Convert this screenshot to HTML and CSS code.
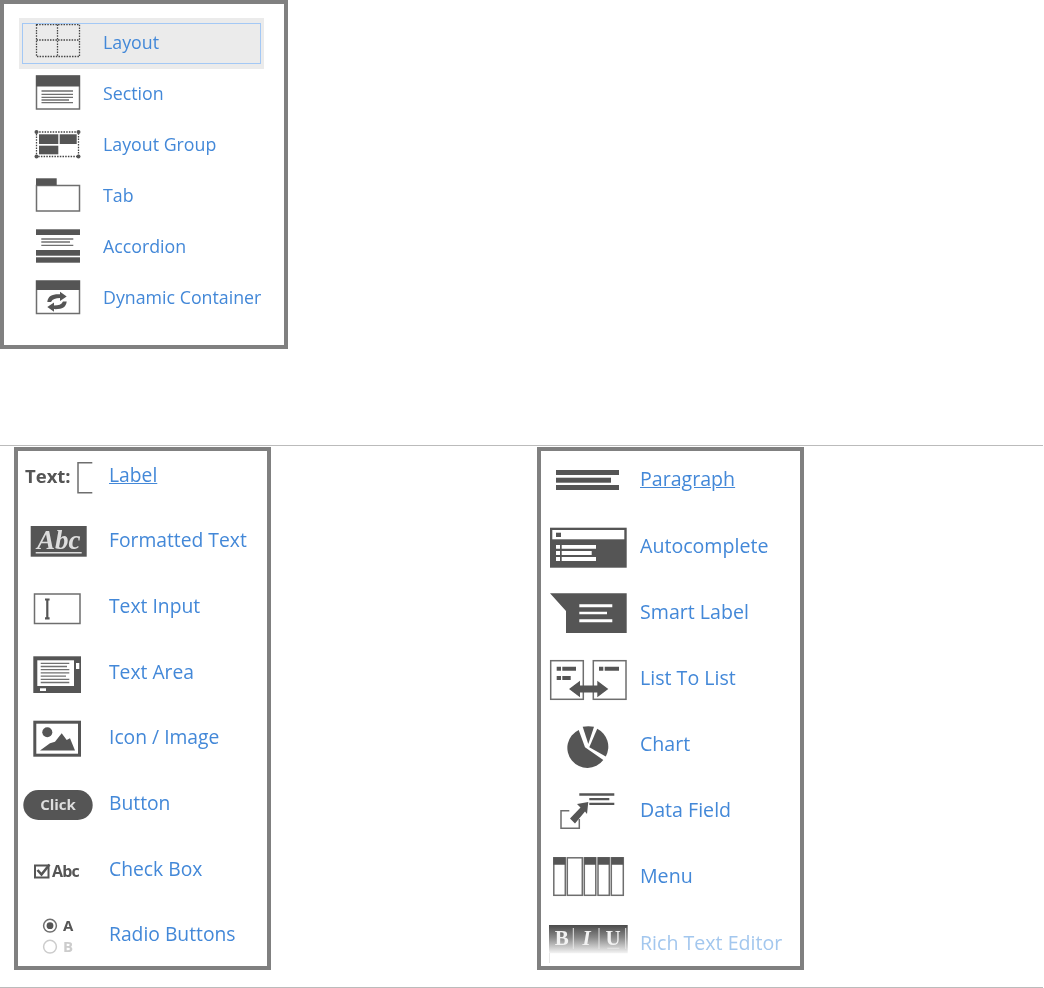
FILE: index.html
```html
<!DOCTYPE html>
<html lang="en">
  <head>
    <meta charset="UTF-8" />
    <title>Layout and control palettes</title>
    <link rel="stylesheet" href="styles.css">
  </head>
  <body>
    <div class="palette palette-top">
      <a class="item item-active">
        <svg class="icon" width="48" height="36" viewBox="0 0 48 36">
          <g class="dots"><rect x="2.5" y="0.5" width="43" height="32"/><path d="M23.5 0.5V32.5M2.5 16H45.5"/></g>
        </svg>
        <span>Layout</span>
      </a>
      <a class="item">
        <svg class="icon" width="48" height="36" viewBox="0 0 48 36">
          <rect class="frame" x="2.5" y="1" width="43" height="33"/><rect class="ink" x="2" y="0.5" width="44" height="11"/>
          <path class="rule" d="M7.5 16H39M7.5 19.3H39M7.5 22.3H39M7.5 25H35M7.5 27.7H39"/>
        </svg>
        <span>Section</span>
      </a>
      <a class="item">
        <svg class="icon" width="48" height="36" viewBox="0 0 48 36">
          <rect class="dots" x="2.5" y="6" width="42" height="24.5"/>
          <circle class="ink" cx="2.5" cy="6" r="2"/><circle class="ink" cx="44.5" cy="6" r="2"/><circle class="ink" cx="2.5" cy="30.5" r="2"/><circle class="ink" cx="44.5" cy="30.5" r="2"/>
          <rect class="ink" x="5" y="8.3" width="19.3" height="9.7"/><rect class="ink" x="25.7" y="8.3" width="17" height="9.7"/><rect class="ink" x="5" y="19.7" width="19.3" height="8.6"/>
        </svg>
        <span>Layout Group</span>
      </a>
      <a class="item">
        <svg class="icon" width="48" height="36" viewBox="0 0 48 36">
          <rect class="frame" x="2.5" y="8.5" width="43" height="25.5"/><rect class="ink" x="2" y="1.3" width="20.7" height="7"/>
        </svg>
        <span>Tab</span>
      </a>
      <a class="item">
        <svg class="icon" width="48" height="36" viewBox="0 0 48 36">
          <rect class="ink" x="2" y="1.3" width="44" height="5.7"/>
          <path class="rule" d="M7.3 11H39.3M7.3 14H36M7.3 17.3H39.3"/>
          <rect class="ink" x="2" y="22" width="44" height="5.7"/><rect class="ink" x="2" y="29.3" width="44" height="5.4"/>
        </svg>
        <span>Accordion</span>
      </a>
      <a class="item">
        <svg class="icon" width="48" height="36" viewBox="0 0 48 36">
          <rect class="frame" x="2.5" y="2" width="43" height="32.5"/><rect class="ink" x="2" y="1.7" width="44" height="9.3"/>
          <path class="ink" d="M13.3 23C14 17 18 15 26 15.3V12.7L32.7 17.5L26 22V19C21.5 19 18.5 20 17 23Z"/>
          <path class="ink" transform="rotate(180 23 22.7)" d="M13.3 23C14 17 18 15 26 15.3V12.7L32.7 17.5L26 22V19C21.5 19 18.5 20 17 23Z"/>
        </svg>
        <span>Dynamic Container</span>
      </a>
    </div>

    <div class="section">
      <div class="palette palette-left">
        <a class="item">
          <svg class="icon" width="72" height="44" viewBox="0 0 72 44">
            <text class="glyph-bold" x="3" y="28" font-size="18.5">Text:</text>
            <path class="frame" d="M70.3 7.7H56V37.7H70.3"/>
          </svg>
          <span class="under">Label</span>
        </a>
        <a class="item">
          <svg class="icon" width="72" height="44" viewBox="0 0 72 44">
            <rect class="ink" x="8.7" y="6" width="56" height="30.7"/>
            <text class="glyph-serif" x="36.7" y="28.5" font-size="27" font-style="italic" text-anchor="middle">Abc</text>
            <path class="pale" d="M13.7 32.7H59.7"/>
          </svg>
          <span>Formatted Text</span>
        </a>
        <a class="item">
          <svg class="icon" width="72" height="44" viewBox="0 0 72 44">
            <rect class="frame" x="12.5" y="8" width="45.5" height="29.5"/>
            <path class="caret" d="M23 13.5H27.6M25.3 13.5V32M23 32.3H27.6"/>
          </svg>
          <span>Text Input</span>
        </a>
        <a class="item">
          <svg class="icon" width="72" height="44" viewBox="0 0 72 44">
            <rect class="ink" x="11.3" y="4.3" width="47.7" height="36.7"/>
            <rect class="blank" x="15.3" y="8.3" width="36.7" height="25.7"/>
            <path class="rule" d="M18.7 11.3H47.3M18.7 14.5H45M18.7 17.7H47.3M18.7 20.9H47.3M18.7 24.1H44M18.7 27.3H47.3M18.7 30.5H47.3"/>
            <rect class="blank" x="54" y="11" width="3.3" height="6"/><rect class="blank" x="18" y="36.3" width="6" height="2.7"/>
          </svg>
          <span>Text Area</span>
        </a>
        <a class="item">
          <svg class="icon" width="72" height="44" viewBox="0 0 72 44">
            <rect class="frame-thick" x="12.8" y="5.2" width="44.7" height="33"/>
            <circle class="ink" cx="25.3" cy="15.3" r="5"/>
            <path class="ink" d="M18 33.5L28 26.3L33 24.7L39.7 16.3L44.7 23L48 21.3L53 33.5Z"/>
          </svg>
          <span>Icon / Image</span>
        </a>
        <a class="item">
          <svg class="icon" width="72" height="44" viewBox="0 0 72 44">
            <rect class="ink" x="1.3" y="7" width="69.4" height="30" rx="15"/>
            <text class="glyph-light" x="36" y="27" font-size="15" text-anchor="middle">Click</text>
          </svg>
          <span>Button</span>
        </a>
        <a class="item">
          <svg class="icon" width="72" height="44" viewBox="0 0 72 44">
            <rect class="frame-dark" x="13" y="16.5" width="13.5" height="12"/>
            <path class="tick" d="M15.5 21L19.5 25.5L27.5 15.5"/>
            <text class="glyph-bold glyph-tight" x="30" y="28" font-size="16">Abc</text>
          </svg>
          <span>Check Box</span>
        </a>
        <a class="item">
          <svg class="icon" width="72" height="44" viewBox="0 0 72 44">
            <circle class="frame" cx="28" cy="11.7" r="6.4"/><circle class="ink" cx="28" cy="11.7" r="3.4"/>
            <text class="glyph-bold" x="41" y="16.7" font-size="15">A</text>
            <circle class="frame-pale" cx="28" cy="32.7" r="6.4"/>
            <text class="glyph-bold glyph-pale" x="41" y="37.7" font-size="15">B</text>
          </svg>
          <span>Radio Buttons</span>
        </a>
      </div>

      <div class="palette palette-right">
        <a class="item">
          <svg class="icon" width="82" height="44" viewBox="0 0 82 44">
            <rect class="ink" x="8" y="12" width="63" height="5"/><rect class="ink" x="8" y="19.7" width="55" height="5"/><rect class="ink" x="8" y="27" width="63" height="5"/>
          </svg>
          <span class="under">Paragraph</span>
        </a>
        <a class="item">
          <svg class="icon" width="82" height="44" viewBox="0 0 82 44">
            <rect class="ink" x="2" y="2.7" width="76.7" height="40"/>
            <rect class="blank" x="4.3" y="5" width="72" height="9.3"/><rect class="ink" x="8" y="7.7" width="5" height="4.3"/>
            <path class="blank" d="M8 20H12V23.7H8ZM8 26H12V30H8ZM8 32H12V36H8ZM13.7 20H48V23.7H13.7ZM13.7 26H43.7V30H13.7ZM13.7 32H48V36H13.7Z"/>
          </svg>
          <span>Autocomplete</span>
        </a>
        <a class="item">
          <svg class="icon" width="82" height="44" viewBox="0 0 82 44">
            <path class="ink" d="M2 2.3H78.7V42H18V20Z"/>
            <path class="blank" d="M31.3 13.3H64.3V16.3H31.3ZM31.3 20.7H59V23.3H31.3ZM31.3 28.3H64.3V31.3H31.3Z"/>
          </svg>
          <span>Smart Label</span>
        </a>
        <a class="item">
          <svg class="icon" width="82" height="44" viewBox="0 0 82 44">
            <rect class="frame" x="2.7" y="3.7" width="32.6" height="38.6"/><rect class="frame" x="45.3" y="3.7" width="32.7" height="38.6"/>
            <path class="ink" d="M8.7 9.7H13V13.7H8.7ZM14.3 9.7H28V13.7H14.3ZM8.7 19H13V23H8.7ZM14.3 19H22.7V23H14.3ZM51 9.7H55.3V13.7H51ZM56.7 9.7H71V13.7H56.7Z"/>
            <path class="ink" d="M21 32L32 23.7V28.5H49.3V23.7L60.3 32L49.3 40.3V35.5H32V40.3Z"/>
          </svg>
          <span>List To List</span>
        </a>
        <a class="item">
          <svg class="icon icon-chart" width="82" height="44" viewBox="0 0 82 44">
            <path class="ink" d="M30.7 6.9A20 20 0 1 0 55.3 37L37 24.3Z"/>
            <path class="ink" d="M34.7 3.7Q40.3 2.8 46 3.7L40.3 21Z"/>
            <path class="ink" d="M49.2 5.8A20 20 0 0 1 57.8 33.4L41.3 24.3Z"/>
          </svg>
          <span>Chart</span>
        </a>
        <a class="item">
          <svg class="icon" width="82" height="44" viewBox="0 0 82 44">
            <path class="ink" d="M31.3 4.3H66.3V6.7H31.3ZM41.3 9H61.3V11.3H41.3ZM41.3 13.7H66.3V16H41.3Z"/>
            <path class="frame" d="M21.3 21.7H13V39.3H31.3V30"/>
            <path class="ink" d="M40.3 13L29 15L32.5 18.5L22 29.5L27 34.5L37 22.5L39 25Z"/>
          </svg>
          <span>Data Field</span>
        </a>
        <a class="item">
          <svg class="icon" width="82" height="44" viewBox="0 0 82 44">
            <rect class="frame" x="5.8" y="2.8" width="11.5" height="37.5"/><rect class="frame" x="19.3" y="2.8" width="15" height="37.5"/><rect class="frame" x="36.3" y="2.8" width="11.5" height="37.5"/><rect class="frame" x="50" y="2.8" width="11.3" height="37.5"/><rect class="frame" x="63.3" y="2.8" width="12" height="37.5"/>
            <path class="ink" d="M5.3 2.3H17.3V9.7H5.3ZM36.3 2.3H48V9.7H36.3ZM50 2.3H61.3V9.7H50ZM63.3 2.3H75.3V9.7H63.3Z"/>
          </svg>
          <span>Menu</span>
        </a>
        <a class="item item-faded">
          <svg class="icon" width="82" height="44" viewBox="0 0 82 44">
            <defs>
              <linearGradient id="rte-fade" x1="0" y1="0" x2="0" y2="1">
                <stop offset="0" stop-color="#4a4a4a"/><stop offset="0.45" stop-color="#8a8a8a"/><stop offset="1" stop-color="#f4f4f4"/>
              </linearGradient>
            </defs>
            <rect x="1" y="3" width="78.7" height="28.3" fill="url(#rte-fade)"/>
            <path class="pale-thin" d="M1.5 31V41M25.3 6V27M51 6V27M77.7 6V27"/>
            <text class="glyph-serif glyph-white" x="13.7" y="23" font-size="21" text-anchor="middle">B</text>
            <text class="glyph-serif glyph-white" x="38.7" y="23" font-size="21" font-style="italic" text-anchor="middle">I</text>
            <text class="glyph-serif glyph-white" x="65" y="23" font-size="21" text-anchor="middle">U</text>
            <path class="pale-thin" d="M59.3 26.3H71.3"/>
          </svg>
          <span>Rich Text Editor</span>
        </a>
      </div>
    </div>
  </body>
</html>
```

FILE: styles.css
```css
body {
  margin: 0;
  background-color: white;
  font-family: "Open Sans", "Liberation Sans", sans-serif;
  color: #4388d8;
}

.palette {
  box-sizing: border-box;
  border: 4px solid #808080;
  background-color: white;
  display: flex;
  flex-direction: column;
}

.palette-top {
  width: 288px;
  height: 349px;
  padding: 14px 0 0 15px;
  font-size: 17.8px;
}

.section {
  box-sizing: border-box;
  width: 1043px;
  height: 543px;
  margin-top: 96px;
  padding-top: 1px;
  border-top: 1px solid #bbbbbb;
  border-bottom: 1px solid #bbbbbb;
  display: flex;
  align-items: flex-start;
}

.palette-left {
  width: 257px;
  height: 523px;
  margin-left: 14px;
  padding: 3px 0 0 4px;
  row-gap: 20.7px;
  font-size: 19.3px;
}

.palette-right {
  width: 267px;
  height: 523px;
  margin-left: 266px;
  padding: 7px 0 0 7px;
  row-gap: 21.3px;
  font-size: 19.6px;
}

.item {
  display: flex;
  align-items: center;
  height: 45px;
}

/* the source is a scaled-up picture, everything is a little soft */
.item .icon,
.item span {
  filter: blur(0.35px);
}

.item .icon {
  display: block;
  flex: none;
}

.icon-chart {
  overflow: visible;
}

.palette-top .item {
  position: relative;
  width: 245px;
  height: 51px;
  align-items: flex-start;
  padding: 6px 0 0 15px;
  box-sizing: border-box;
}

.palette-top .item span {
  margin-left: 21px;
  line-height: 36px;
}

.palette-left .item span {
  margin-left: 15px;
  margin-bottom: 5px;
}

.palette-right .item span {
  margin-left: 10px;
  margin-bottom: 3px;
}

.item-active {
  background-color: #ebebeb;
}

.item-active::after {
  content: "";
  position: absolute;
  top: 5px;
  left: 3px;
  right: 3px;
  bottom: 5px;
  border: 1px solid #a3c8f5;
}

.item-faded span {
  color: #a3c7ee;
}

.under {
  text-decoration: underline;
}

/* icon parts */
.ink {
  fill: #555555;
}

.blank {
  fill: white;
}

.frame {
  fill: none;
  stroke: #6e6e6e;
  stroke-width: 1.5;
}

.frame-dark {
  fill: none;
  stroke: #555555;
  stroke-width: 2;
}

.frame-thick {
  fill: none;
  stroke: #555555;
  stroke-width: 3;
}

.frame-pale {
  fill: none;
  stroke: #cccccc;
  stroke-width: 1.5;
}

.dots {
  fill: none;
  stroke: #444444;
  stroke-width: 1.3;
  stroke-dasharray: 1.5 1.2;
}

.rule {
  fill: none;
  stroke: #707070;
  stroke-width: 1.3;
}

.caret {
  fill: none;
  stroke: #555555;
  stroke-width: 2.2;
}

.tick {
  fill: none;
  stroke: #555555;
  stroke-width: 2.6;
}

.pale {
  fill: none;
  stroke: #dddddd;
  stroke-width: 1.5;
}

.pale-thin {
  fill: none;
  stroke: #e6e6e6;
  stroke-width: 1;
}

.glyph-bold {
  font-family: "Open Sans", sans-serif;
  font-weight: 700;
  fill: #555555;
}

.glyph-tight {
  letter-spacing: -0.8px;
}

.glyph-pale {
  fill: #cccccc;
}

.glyph-light {
  font-family: "Open Sans", sans-serif;
  font-weight: 700;
  fill: #dddddd;
}

.glyph-serif {
  font-family: "Liberation Serif", serif;
  font-weight: 700;
  fill: #dddddd;
}

.glyph-white {
  fill: #f2f2f2;
}
```
